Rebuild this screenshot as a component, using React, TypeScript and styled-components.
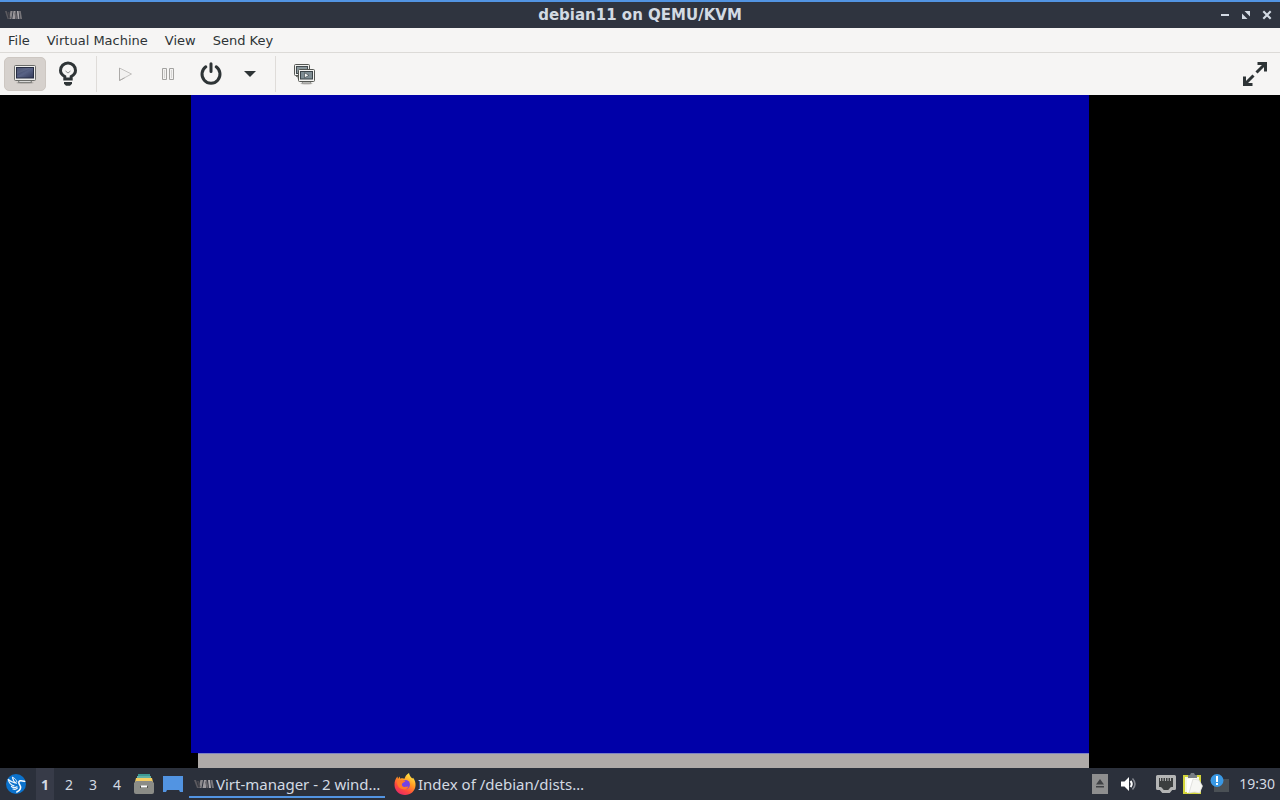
import React from "react";
import styled, { createGlobalStyle } from "styled-components";

const GlobalStyle = createGlobalStyle`
  *, *::before, *::after { box-sizing: border-box; }
  body { margin: 0; background: #000; }
  button { margin: 0; padding: 0; border: 0; background: none; font: inherit; color: inherit; }
  svg { display: block; flex: none; }
`;

const Screen = styled.div`
  display: flex;
  flex-direction: column;
  height: 100vh;
  overflow: hidden;
  font-family: "DejaVu Sans", sans-serif;
  font-size: 13px;
  color: #2e3436;
`;

const TitleBar = styled.header`
  display: grid;
  grid-template-columns: 1fr auto 1fr;
  align-items: center;
  flex: none;
  height: 28px;
  padding: 0 5px;
  border-top: 2px solid #5294e2;
  background: #2f343f;
  color: #d3dae3;
`;

const WindowTitle = styled.h1`
  margin: 0;
  font-size: 15px;
  line-height: 26px;
  font-weight: 700;
`;

const WindowControls = styled.div`
  display: flex;
  justify-content: flex-end;
  gap: 5px;
`;

const ControlButton = styled.button`
  display: grid;
  place-items: center;
  width: 16px;
  height: 16px;
`;

const MenuBar = styled.nav`
  display: flex;
  flex: none;
  gap: 1px;
  height: 25px;
  background: #f6f5f4;
  border-bottom: 1px solid #dcdad7;
`;

const MenuItem = styled.button`
  padding: 0 8px;
  line-height: 26px;
  height: 24px;
`;

const ToolBar = styled.div`
  display: flex;
  align-items: center;
  flex: none;
  height: 42px;
  padding: 0 4px;
  background: #f6f5f4;
`;

const ToolButton = styled.button<{ $active?: boolean; $width?: number }>`
  display: grid;
  place-items: center;
  width: ${(p) => p.$width ?? 42}px;
  height: 34px;
  border: 1px solid ${(p) => (p.$active ? "#cdc7c2" : "transparent")};
  border-radius: 5px;
  background: ${(p) => (p.$active ? "#d6d1cd" : "transparent")};
`;

const ToolSeparator = styled.span`
  width: 1px;
  height: 36px;
  margin: 0 7px;
  background: #dfdcd9;
`;

const Spacer = styled.span`
  flex: 1;
`;

const Console = styled.main`
  display: flex;
  justify-content: center;
  flex: 1;
  min-height: 0;
  background: #000;
`;

const GuestDisplay = styled.div`
  display: flex;
  flex-direction: column;
  height: 100%;
  aspect-ratio: 4 / 3;
`;

const GuestBackground = styled.div`
  flex: 1;
  background: #0000a8;
`;

const GuestStatusLine = styled.div`
  height: 15px;
  margin-left: 7px;
  border-top: 1px solid #7c82c4;
  background: #aeaaa8;
`;

const Panel = styled.footer`
  display: flex;
  align-items: center;
  flex: none;
  height: 32px;
  padding: 0 5px 0 6px;
  background: #2b303b;
  color: #d3dae3;
  font-family: "Noto Sans", sans-serif;
  font-size: 14px;
`;

const Launcher = styled.button`
  display: grid;
  place-items: center;
  width: 20px;
  height: 32px;
`;

const DesktopSwitcher = styled.div`
  display: flex;
  margin: 0 5px 0 7px;
`;

const DesktopButton = styled.button<{ $current?: boolean }>`
  width: 24px;
  height: 32px;
  line-height: 34px;
  text-align: center;
  font-weight: ${(p) => (p.$current ? 700 : 400)};
  background: linear-gradient(${(p) => (p.$current ? "#373b48, #373b48" : "transparent, transparent")}) center / 18px 32px no-repeat;
`;

const Launchers = styled.div`
  display: flex;
  gap: 9px;
  margin-right: 6px;
`;

const TaskList = styled.div`
  display: flex;
  gap: 4px;
`;

const TaskButton = styled.button<{ $active?: boolean }>`
  display: flex;
  align-items: center;
  gap: 2px;
  width: 196px;
  height: 28px;
  padding: 0 5px;
  border-bottom: 2px solid ${(p) => (p.$active ? "#5294e2" : "transparent")};
  border-top: 2px solid transparent;
  font-size: 15px;
  line-height: 24px;
  white-space: nowrap;
`;

const Tray = styled.div`
  display: flex;
  align-items: center;
  gap: 7px;
`;

const TrayButton = styled.button<{ $gapAfter?: number }>`
  display: grid;
  place-items: center;
  margin-right: ${(p) => p.$gapAfter ?? 0}px;
`;

const Clock = styled.time`
  margin-left: 2px;
  line-height: 32px;
`;

const VmLogo = ({ width }: { width: number }) => (
  <svg width={width} height={10} viewBox="0 0 20 10" preserveAspectRatio="none" aria-hidden="true">
    <path d="M0 1l2 0 2.500 8-1.500 0z" fill="#5d5b60" />
    <path d="M4.500 9L6.500 1h2.500L7.500 9z" fill="#8b898d" />
    <path d="M3 2h2l1.500 6-1.500 1z" fill="#48474d" />
    <path d="M8.500 9L10 1h2.500l-.5 8z" fill="#9d9a9e" />
    <path d="M11 3l2-2 1.500 8h-2z" fill="#67656a" />
    <path d="M14 1h2l1 8h-2z" fill="#aaa7ab" />
    <path d="M16.500 1h2l1.500 8h-2z" fill="#77757a" />
  </svg>
);

const MinimizeIcon = () => (
  <svg width="10" height="10" viewBox="0 0 10 10"><path d="M1 5h8" stroke="#d3dae3" strokeWidth="2" /></svg>
);

const RestoreIcon = () => (
  <svg width="10" height="10" viewBox="0 0 10 10" fill="#d3dae3">
    <path d="M3.500 1H9v5.500zM1 3.500L6.500 9H1z" />
  </svg>
);

const CloseIcon = () => (
  <svg width="10" height="10" viewBox="0 0 10 10"><path d="M1.3 1.3l7.4 7.4M8.7 1.3L1.3 8.7" stroke="#d3dae3" strokeWidth="2.1" /></svg>
);

const MonitorIcon = () => (
  <svg width="24" height="24" viewBox="0 0 24 24">
    <defs>
      <linearGradient id="crt" x1="0" y1="0" x2="1" y2="1">
        <stop offset="0" stopColor="#2e3652" /><stop offset="0.5" stopColor="#596386" /><stop offset="1" stopColor="#323958" />
      </linearGradient>
    </defs>
    <ellipse cx="12" cy="20.8" rx="9" ry="1.2" fill="#a39f9b" opacity="0.6" />
    <path d="M6.5 18.5h11l1.3 1.8H5.2z" fill="#f1f1ef" stroke="#676865" strokeWidth="0.9" />
    <rect x="1.5" y="3.5" width="21" height="15" rx="1" fill="#ededeb" stroke="#6a6b68" />
    <rect x="3.5" y="5.5" width="17" height="10.5" fill="url(#crt)" stroke="#272d43" />
    <path d="M4 6h14L4 12z" fill="#7a83a0" opacity="0.35" />
  </svg>
);

const BulbIcon = () => (
  <svg width="25" height="26" viewBox="-1 0 25 26">
    <path d="M8.8 18v-2.500C6 13.900 4.500 12 4.500 9.400a7.500 7.500 0 0 1 15 0c0 2.600-1.500 4.500-4.300 6.100V18z" fill="none" stroke="#2e3436" strokeWidth="3" />
    <path d="M9.500 10l2.500 2 2.500-2" fill="none" stroke="#8a8d8d" strokeWidth="1" />
    <path d="M8 21h8v1.800l-2 2h-4l-2-2z" fill="#2e3436" />
  </svg>
);

const PlayIcon = () => (
  <svg width="16" height="16" viewBox="0 0 16 16">
    <path d="M2.5 2v12.5L14.5 8z" fill="#f2f1f0" stroke="#c4c2c0" strokeLinejoin="round" />
    <path d="M2.5 2v12.5l5-2.6" fill="none" stroke="#acaaa8" />
  </svg>
);

const PauseIcon = () => (
  <svg width="16" height="16" viewBox="0 0 16 16" fill="#f3f2f1" stroke="#a3a2a0">
    <path d="M2.5 2.5h4v11h-4zM9.5 2.5h4v11h-4z" />
    <path d="M4.5 4v8M11.5 4v8" stroke="#d6d5d3" />
  </svg>
);

const PowerIcon = () => (
  <svg width="24" height="24" viewBox="0 0 24 24" fill="none" stroke="#2e3436" strokeWidth="3" strokeLinecap="round">
    <path d="M6.8 4.8a9 9 0 1 0 10.4 0M12 1.8v7.7" />
  </svg>
);

const ArrowDownIcon = () => (
  <svg width="12" height="6" viewBox="0 0 12 6"><path d="M0 0h12L6 6z" fill="#2e3436" /></svg>
);

const SnapshotsIcon = () => (
  <svg width="24" height="24" viewBox="0 0 24 24">
    <rect x="2.5" y="2.5" width="15" height="11" rx="1" fill="#f1f1ef" stroke="#555753" />
    <rect x="4.5" y="4.5" width="11" height="7" fill="#8a979b" stroke="#444c50" />
    <path d="M4 14.500h2v2" fill="none" stroke="#777975" />
    <ellipse cx="14.500" cy="21.500" rx="6" ry="1" fill="#bdbbb8" />
    <path d="M11 19.500h7l1 1.500h-9z" fill="#d9d8d5" stroke="#777975" strokeWidth="0.700" />
    <rect x="6.5" y="7.5" width="16" height="12" rx="1" fill="#f4f4f2" stroke="#555753" />
    <rect x="8.500" y="9.500" width="12" height="7.500" fill="#7f8d93" stroke="#3c4448" />
    <path d="M12.500 10.800v5l4.500-2.500z" fill="#f5f5f3" stroke="#333b3e" strokeWidth="0.6" />
  </svg>
);

const FullscreenIcon = () => (
  <svg width="26" height="26" viewBox="0 0 26 26" fill="none" stroke="#2e3436" strokeWidth="3">
    <path d="M15.5 2.5h8v8M23 3l-8.5 8.5M2.5 15.5v8h8M3 23l8.5-8.5" />
  </svg>
);

const BirdIcon = () => (
  <svg width="20" height="20" viewBox="0 0 20 20">
    <circle cx="10" cy="10" r="10" fill="#0b72cc" />
    <path d="M2.300 5.500C3 9 4.600 11 8 11.800M2.300 5.500c2.200 2 4.400 2.600 6.600 3.500M6.500 3.300c.3 2.600 1.600 4.700 3.800 6" fill="none" stroke="#eef6fd" strokeWidth="1.200" strokeLinecap="round" />
    <path d="M6.500 3.300c2.500 1 4 2.700 4.500 5" fill="none" stroke="#d5e8f8" strokeWidth="1" />
    <path d="M18.700 7.400c-2-.6-3.400-1.100-4.700-.6-1.900.8-1.300 2.700-.2 4.200 1.800 2.500.6 5.600-3 7" fill="none" stroke="#fff" strokeWidth="1.500" strokeLinecap="round" />
    <path d="M5.500 12.500c1.600 1.400 4 1.300 5.500.3M7 15c1.600.6 3.300.2 4.300-.8" fill="none" stroke="#eef6fd" strokeWidth="1.200" strokeLinecap="round" />
  </svg>
);

const FilesIcon = () => (
  <svg width="20" height="20" viewBox="0 0 20 20">
    <path d="M4 0h12v3H4z" fill="#3d9a93" />
    <path d="M3 2h14v3H3z" fill="#62b0a5" />
    <path d="M2 4h16l1 4H1z" fill="#f4cd62" />
    <path d="M2 7h16l2 2v9a2 2 0 0 1-2 2H2a2 2 0 0 1-2-2V9z" fill="#8b8c87" />
    <path d="M6 12h8v2H6z" fill="#555651" /><path d="M7 11.500h6v2H7z" fill="#fff" />
  </svg>
);

const ShowDesktopIcon = () => (
  <svg width="20" height="20" viewBox="0 0 20 20">
    <path d="M0 2h20v16h-3l-1-2H4l-1 2H0z" fill="#5294e2" />
  </svg>
);

const FirefoxIcon = () => (
  <svg width="22" height="22" viewBox="0 0 22 22">
    <defs>
      <linearGradient id="flame" x1="0.8" y1="0" x2="0.2" y2="1">
        <stop offset="0" stopColor="#fff44f" /><stop offset="0.4" stopColor="#ff9a22" /><stop offset="0.7" stopColor="#ff4a3d" /><stop offset="1" stopColor="#e3246e" />
      </linearGradient>
    </defs>
    <path d="M.5 12C.3 8 1.800 5.500 3.500 3.500L4 6l1.500-2.500.8 2.300C8 5 9.500 5.300 10.500 5.800 11 3.500 12.500 1.500 15 0c.4 2.700 2 4 3.300 5.500l.8-.8c2 2.500 2.700 5.300 2.400 8C21 18 16.700 22 11 22S.7 18 .5 12z" fill="url(#flame)" />
    <circle cx="11.500" cy="11.500" r="4.500" fill="#7542e5" />
    <path d="M3 8.500c3-2.300 5.500-1.500 8.500-.7-.5 1.700-2.700 1.500-3.500 3-.6 2 1.300 3.700 3.700 3 1-.3 2-.6 2.800-.3-1 2.800-4 3.600-6.500 2.600C4.500 15 3 12 3 8.500z" fill="#ff7a2a" />
  </svg>
);

const EjectIcon = () => (
  <svg width="16" height="20" viewBox="0 0 16 20">
    <rect width="16" height="20" fill="#8e8e8f" />
    <path d="M4 10.500h8L8 5zM4 12h8v1.500H4z" fill="#3f4145" />
  </svg>
);

const SpeakerIcon = () => (
  <svg width="16" height="16" viewBox="0 0 16 16" fill="none">
    <path d="M0 5.500h3.500L8 1v14l-4.500-4.500H0z" fill="#fff" />
    <path d="M9.500 5q2.500 3 0 6" stroke="#fff" strokeWidth="2" />
    <path d="M11.500 2.500q5 5.500 0 11" stroke="#858890" strokeWidth="1.5" />
  </svg>
);

const NetworkIcon = () => (
  <svg width="20" height="18" viewBox="0 0 20 18">
    <path d="M1.500 1.500h17v12h-3l-2.500 3H7l-2.500-3h-3z" fill="#3c3f3f" stroke="#b4b5b5" strokeWidth="3" strokeLinejoin="round" />
    <path d="M4.500 3v3M7 3v3M9.500 3v3M12 3v3M14.500 3v3" stroke="#b4b5b5" />
  </svg>
);

const ClipboardIcon = () => (
  <svg width="20" height="22" viewBox="0 0 20 22">
    <path d="M1 3h16v17H1z" fill="#f5f7df" stroke="#d3d53a" strokeWidth="2" />
    <path d="M5 2h2l1-2h3l1 2h2v3H5z" fill="#777d82" />
    <path d="M4 6l8-1 4 2 3 6-2 7-7-1-6 1z" fill="#fff" />
    <path d="M10 6l6 1 3.500 6-3 7-4.500-1-6 1z" fill="#f7f7f4" stroke="#d7d7d4" strokeWidth="0.700" />
  </svg>
);

const UpdateIcon = () => (
  <svg width="20" height="20" viewBox="0 0 20 20">
    <path d="M4 5h15v13H4z" fill="#4a5055" />
    <circle cx="7" cy="6.500" r="6.500" fill="#3998e4" />
    <path d="M6 2h2v6H6zM6 9h2v2H6z" fill="#fff" />
  </svg>
);

const menus = ["File", "Virtual Machine", "View", "Send Key"];
const desktops = [1, 2, 3, 4];

export default function App() {
  return (
    <Screen>
      <GlobalStyle />
      <TitleBar>
        <VmLogo width={17} />
        <WindowTitle>debian11 on QEMU/KVM</WindowTitle>
        <WindowControls>
          <ControlButton aria-label="Minimize"><MinimizeIcon /></ControlButton>
          <ControlButton aria-label="Restore"><RestoreIcon /></ControlButton>
          <ControlButton aria-label="Close"><CloseIcon /></ControlButton>
        </WindowControls>
      </TitleBar>
      <MenuBar>
        {menus.map((label) => <MenuItem key={label}>{label}</MenuItem>)}
      </MenuBar>
      <ToolBar>
        <ToolButton $active aria-label="Show the graphical console"><MonitorIcon /></ToolButton>
        <ToolButton $width={43} aria-label="Show virtual hardware details"><BulbIcon /></ToolButton>
        <ToolSeparator />
        <ToolButton disabled aria-label="Run"><PlayIcon /></ToolButton>
        <ToolButton $width={44} disabled aria-label="Pause"><PauseIcon /></ToolButton>
        <ToolButton aria-label="Shut down"><PowerIcon /></ToolButton>
        <ToolButton $width={36} aria-label="Shut down menu"><ArrowDownIcon /></ToolButton>
        <ToolSeparator />
        <ToolButton aria-label="Manage snapshots"><SnapshotsIcon /></ToolButton>
        <Spacer />
        <ToolButton aria-label="Fullscreen"><FullscreenIcon /></ToolButton>
      </ToolBar>
      <Console>
        <GuestDisplay>
          <GuestBackground />
          <GuestStatusLine />
        </GuestDisplay>
      </Console>
      <Panel>
        <Launcher aria-label="Application menu"><BirdIcon /></Launcher>
        <DesktopSwitcher>
          {desktops.map((n) => <DesktopButton key={n} $current={n === 1}>{n}</DesktopButton>)}
        </DesktopSwitcher>
        <Launchers>
          <Launcher aria-label="File manager"><FilesIcon /></Launcher>
          <Launcher aria-label="Show desktop"><ShowDesktopIcon /></Launcher>
        </Launchers>
        <TaskList>
          <TaskButton $active><VmLogo width={20} />Virt-manager - 2 wind…</TaskButton>
          <TaskButton><FirefoxIcon />Index of /debian/dists…</TaskButton>
        </TaskList>
        <Spacer />
        <Tray>
          <TrayButton $gapAfter={6} aria-label="Removable media"><EjectIcon /></TrayButton>
          <TrayButton $gapAfter={12} aria-label="Volume"><SpeakerIcon /></TrayButton>
          <TrayButton aria-label="Network"><NetworkIcon /></TrayButton>
          <TrayButton aria-label="Clipboard"><ClipboardIcon /></TrayButton>
          <TrayButton aria-label="Updates"><UpdateIcon /></TrayButton>
          <Clock>19:30</Clock>
        </Tray>
      </Panel>
    </Screen>
  );
}
